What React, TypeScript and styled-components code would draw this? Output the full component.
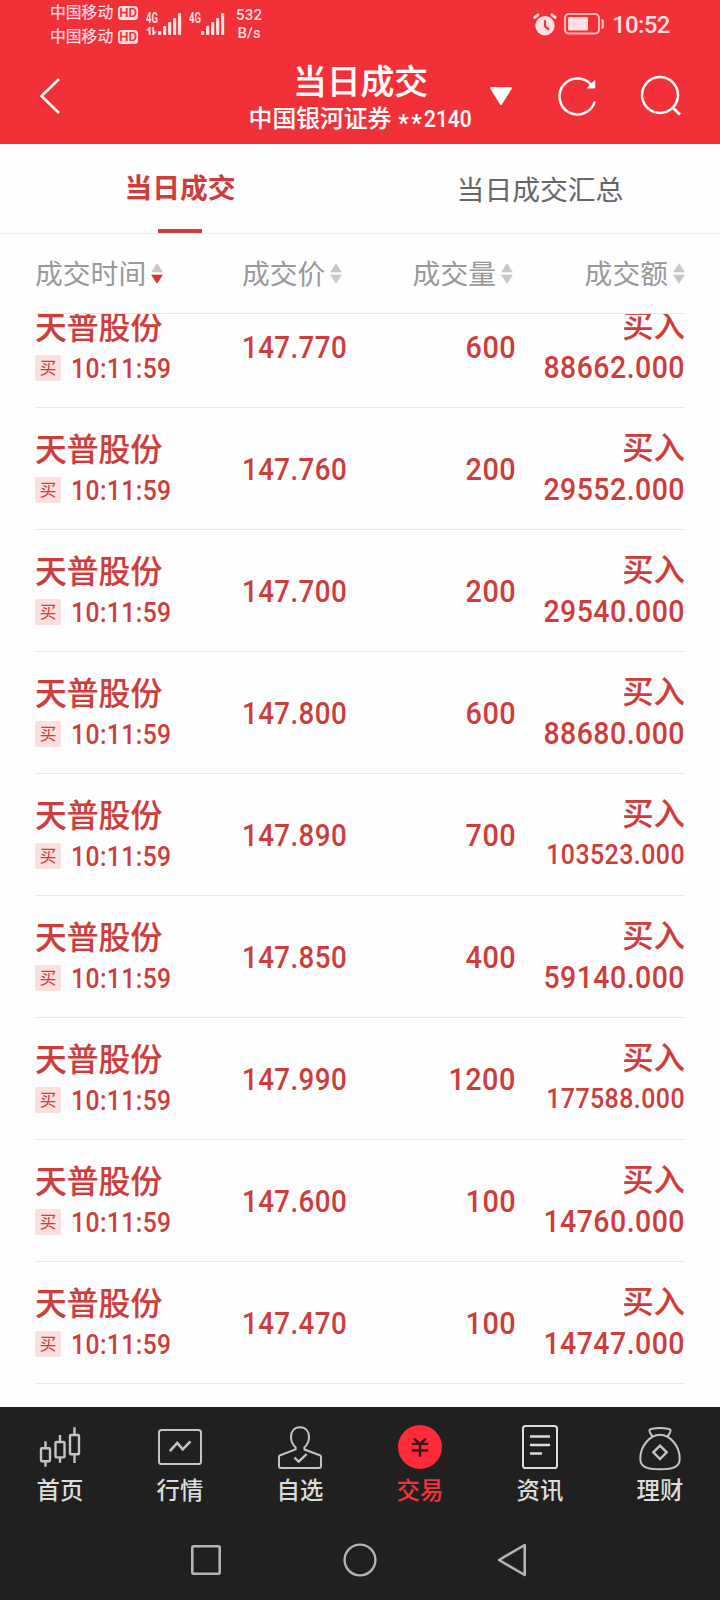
import React from 'react';
import styled, { createGlobalStyle } from 'styled-components';

const GlobalStyle = createGlobalStyle`
  * { box-sizing: border-box; }
  body {
    margin: 0;
    background: #fefefe;
    font-family: Roboto, "Noto Sans CJK SC", sans-serif;
  }
  svg { display: block; flex: none; }
`;

const RED = '#cd3d3c';

const Screen = styled.div`
  width: 720px;
  height: 1600px;
  display: flex;
  flex-direction: column;
  overflow: hidden;
  background: #fefefe;
`;

const Top = styled.header`
  height: 144px;
  flex: none;
  background: #f23038;
  color: #fff;
`;

const StatusBar = styled.div`
  height: 48px;
  display: flex;
  align-items: flex-start;
  padding: 0 50px 0 50px;
  color: #ffdfe1;
`;

const Carriers = styled.div`
  display: flex;
  flex-direction: column;
  padding-top: 1px;
`;

const Carrier = styled.div`
  height: 24px;
  display: flex;
  align-items: center;
  gap: 5px;
  font-size: 15.8px;
  line-height: 24px;
  -webkit-text-stroke: 0.2px;
`;

const HdBadge = styled.span`
  width: 20px;
  height: 14px;
  border-radius: 3.5px;
  background: #ffdfe1;
  color: #f23038;
  font-size: 13px;
  font-weight: 500;
  line-height: 14.5px;
  text-align: center;
`;

const Signal = styled.div<{ $gap: number }>`
  display: flex;
  margin: 13px 0 0 ${(p) => p.$gap}px;
`;

const NetType = styled.div`
  width: 12px;
  height: 22px;
  font-size: 14px;
  font-weight: 700;
  line-height: 11px;
  svg { margin-top: 3px; }
`;

const NetLabel = styled.span`
  display: block;
  transform: scaleX(0.68);
  transform-origin: left;
`;

const Speed = styled.div`
  width: 36px;
  margin: 6px 0 0 6px;
  font-size: 15px;
  font-weight: 500;
  line-height: 18px;
  text-align: center;
  letter-spacing: 0.2px;
`;

const StatusRight = styled.div`
  margin-left: auto;
  height: 48px;
  display: flex;
  align-items: center;
  gap: 7px;
`;

const Clock = styled.span`
  font-size: 24px;
  font-weight: 500;
  line-height: 28px;
  width: 58px;
  padding-top: 2px;
  letter-spacing: -0.6px;
`;

const NavBar = styled.div`
  height: 96px;
  display: grid;
  grid-template-columns: 240px 241px 239px;
`;

const BackCell = styled.div`
  padding: 30px 0 0 39px;
`;

const TitleCell = styled.div`
  display: flex;
  flex-direction: column;
  align-items: center;
  padding-top: 14px;
`;

const Title = styled.h1`
  margin: 0;
  font-size: 33.8px;
  font-weight: 500;
  line-height: 41px;
  -webkit-text-stroke: 0.2px;
`;

const Account = styled.div`
  font-size: 23.8px;
  font-weight: 500;
  line-height: 32px;
  height: 32px;
  display: flex;
  white-space: pre;
  -webkit-text-stroke: 0.1px;
`;

const Mask = styled.span`
  display: inline-block;
  padding-top: 4px;
  margin-left: 1px;
  letter-spacing: 2.5px;
`;

const AccountNumber = styled.span`
  display: inline-block;
  width: 48px;
  transform: scaleX(0.88);
  transform-origin: left;
`;

const Actions = styled.div`
  display: flex;
  align-items: flex-start;
  padding-left: 9px;
`;

const Tabs = styled.nav`
  height: 90px;
  flex: none;
  display: grid;
  grid-template-columns: 1fr 1fr;
  border-bottom: 1px solid #ececec;
`;

const Tab = styled.div<{ $active?: boolean }>`
  position: relative;
  padding-top: ${(p) => (p.$active ? 25 : 27)}px;
  text-align: center;
  font-size: 27.8px;
  line-height: 40px;
  font-weight: ${(p) => (p.$active ? 700 : 400)};
  color: ${(p) => (p.$active ? RED : '#666')};
`;

const Underline = styled.span`
  position: absolute;
  left: 158px;
  bottom: 0;
  width: 44px;
  height: 4px;
  background: #c83f40;
`;

const Columns = styled.div`
  margin: 0 35px;
  height: 80px;
  flex: none;
  display: grid;
  grid-template-columns: 207px 150px 121px 172px;
  align-items: center;
  border-bottom: 1px solid #e8e8e8;
  color: #999;
`;

const ColumnHead = styled.div<{ $end?: boolean }>`
  display: flex;
  align-items: center;
  justify-content: ${(p) => (p.$end ? 'flex-end' : 'flex-start')};
  gap: 5px;
  padding-top: 3px;
  font-size: 27.8px;
  line-height: 40px;
  white-space: nowrap;
  svg { margin-top: -4px; }
`;

const List = styled.main`
  flex: 1;
  min-height: 0;
  overflow: hidden;
  padding: 0 35px;
`;

const Scrolled = styled.div`
  margin-top: -28px;
`;

const Row = styled.div`
  height: 122px;
  display: grid;
  grid-template-columns: 207px 150px 122px 171px;
  border-bottom: 1px solid #e8e8e8;
  color: ${RED};
  font-weight: 500;
`;

const Stock = styled.div`
  padding-top: 22px;
`;

const StockName = styled.div`
  font-size: 31.8px;
  line-height: 40px;
  -webkit-text-stroke: 0.15px;
`;

const TimeLine = styled.div`
  display: flex;
  align-items: center;
  gap: 10px;
  height: 40px;
`;

const Side = styled.span`
  width: 26px;
  height: 26px;
  border-radius: 2px;
  background: #fbe0e0;
  font-size: 17px;
  font-weight: 400;
  line-height: 26px;
  text-align: center;
`;

const Num = styled.span<{ $small?: boolean; $end?: boolean; $scale?: number }>`
  display: block;
  font-size: ${(p) => (p.$small ? 28 : 32)}px;
  line-height: 40px;
  letter-spacing: 0.5px;
  white-space: nowrap;
  transform: scaleX(${(p) => p.$scale ?? 0.89});
  transform-origin: ${(p) => (p.$end ? 'right' : 'left')};
`;

const Middle = styled.div<{ $end?: boolean }>`
  padding-top: 41px;
  margin-right: ${(p) => (p.$end ? -2 : 0)}px;
  display: flex;
  justify-content: ${(p) => (p.$end ? 'flex-end' : 'flex-start')};
`;

const TimeText = styled.div`
  padding-top: 2px;
`;

const Amount = styled.div`
  display: flex;
  flex-direction: column;
  align-items: flex-end;
  padding-top: 21px;
`;

const Direction = styled.div`
  font-size: 31.4px;
  line-height: 40px;
  -webkit-text-stroke: 0.15px;
`;

const Bottom = styled.footer`
  height: 193px;
  flex: none;
  background: #202020;
`;

const TabBar = styled.div`
  height: 113px;
  display: grid;
  grid-template-columns: repeat(6, 120px);
  padding-top: 18px;
`;

const TabItem = styled.div<{ $active?: boolean }>`
  display: flex;
  flex-direction: column;
  align-items: center;
  gap: 5px;
  font-size: 23.4px;
  font-weight: 500;
  line-height: 34px;
  color: ${(p) => (p.$active ? '#f5313c' : '#dcdcdc')};
  svg { overflow: visible; }
`;

const SystemBar = styled.div`
  height: 80px;
  display: flex;
  justify-content: center;
  align-items: center;
  gap: 118px;
`;

const SignalBars = () => (
  <svg width="24" height="22" viewBox="0 0 24 22" fill="#ffdfe1">
    <rect x="0" y="18" width="3.2" height="4" rx="1" />
    <rect x="5" y="13" width="3.2" height="9" rx="1" />
    <rect x="10" y="9" width="3.2" height="13" rx="1" />
    <rect x="15" y="5" width="3.2" height="17" rx="1" />
    <rect x="20" y="0" width="3.2" height="22" rx="1" />
  </svg>
);

const DataArrows = () => (
  <svg width="11" height="8" viewBox="0 0 11 8" fill="#ffdfe1">
    <path d="M0 3.5 3 0h1.6v8H2.7V3.5zM6.2 0h1.9v4.5H11L7.8 8H6.2z" />
  </svg>
);

const Sorter = ({ down }: { down?: boolean }) => (
  <svg width="12" height="21" viewBox="0 0 12 21">
    <path d="M6 .6 11.4 9H.6z" fill="#c8c8c8" stroke="#c8c8c8" strokeWidth=".6" />
    <path d="M6 20.4 11.4 12H.6z" fill={down ? '#d93030' : '#c8c8c8'} stroke={down ? '#d93030' : '#c8c8c8'} strokeWidth=".6" />
  </svg>
);

const AlarmIcon = () => (
  <svg width="24" height="23" viewBox="0 0 24 23" fill="none">
    <circle cx="12" cy="12.7" r="9.7" fill="#ffdfe1" />
    <path d="M1.8 4.4 5 1.8M22.2 4.4 19 1.8" stroke="#ffdfe1" strokeWidth="2.8" strokeLinecap="round" />
    <path d="M12 8v5.2l3.4 3" stroke="#f23038" strokeWidth="2.2" strokeLinecap="round" />
  </svg>
);

const BatteryIcon = () => (
  <svg width="41" height="22" viewBox="0 0 41 22" fill="none">
    <rect x="1" y="1" width="34" height="19.6" rx="4" stroke="#ffb9bd" strokeWidth="2" />
    <rect x="4" y="4" width="20" height="13.6" rx="1.5" fill="#ffdfe1" />
    <path d="M37.5 6h1a2 2 0 0 1 1.5 2v6a2 2 0 0 1-1.5 2h-1z" fill="#ffb9bd" />
  </svg>
);

const svgIcon = { width: 44, height: 44, viewBox: '0 0 44 44', fill: 'none', stroke: '#c4c4c4', strokeWidth: 2 };

const CandlesIcon = () => (
  <svg {...svgIcon} strokeWidth={2.4}>
    <rect x="3" y="23.3" width="9" height="13" rx="1" />
    <rect x="17.5" y="17" width="9" height="15.4" rx="1" />
    <rect x="32" y="10" width="9" height="19.3" rx="1" />
    <path d="M7.5 16.3v7M7.5 36.5v5.2M22 10v7M22 32.5v5.3M36.5 2.3V10M36.5 29.5V38" />
  </svg>
);

const QuoteIcon = () => (
  <svg {...svgIcon}>
    <rect x="1" y="5" width="42" height="34" rx="2.6" />
    <path d="M11.8 26.2 19.3 18l5.4 6.4 7.8-8.1" strokeWidth="2.5" />
  </svg>
);

const PersonIcon = () => (
  <svg {...svgIcon}>
    <path d="M17.6 24.4v-2.1C14.4 19.6 13 16.8 13 12c0-6 3.600-9.700 9-9.700S31 6 31 12c0 4.800-1.400 7.600-4.600 10.300v2.200L41.800 30.200Q43 30.700 43 32v9Q43 43 41 43H3Q1 43 1 41v-9Q1 30.700 2.200 30.200Z" strokeLinejoin="round" />
    <path d="M16.5 32.6 20.7 36.7 28.7 29" strokeWidth="2.3" />
  </svg>
);

const TradeIcon = () => (
  <svg {...svgIcon} stroke="#3a1517">
    <circle cx="22" cy="22" r="22" fill="#ff2b39" stroke="none" />
    <path d="M16 13.6 22 19l6-5.400M13.800 18.900h16.400M13.800 25.500h16.400M22 19v12.700" strokeWidth="2.4" />
  </svg>
);

const NewsIcon = () => (
  <svg {...svgIcon} stroke="#dcdcdc">
    <rect x="5" y="1" width="34" height="42" rx="2.6" />
    <path d="M12 11.5h20M12 20h20M12 28.5h12" strokeWidth="2.4" />
  </svg>
);

const MoneyBagIcon = () => (
  <svg {...svgIcon}>
    <path d="M14.6 12 11.9 7.2C10.6 4.6 12 4 14 3.7Q22 2.3 30 3.7C32 4 33.4 4.6 32.1 7.2L29.4 12" />
    <path d="M22 9.8C12.5 9.8 2.3 20.5 2.3 33.5 2.3 41.5 7.5 44.3 22 44.3S41.7 41.5 41.7 33.5C41.7 20.5 31.5 9.8 22 9.8Z" />
    <path d="M22 20.6 28.7 27.3 22 34 15.3 27.3Z" strokeWidth="2.4" />
  </svg>
);

type Trade = { price: string; volume: string; amount: string };

const trades: Trade[] = [
  { price: '147.770', volume: '600', amount: '88662.000' },
  { price: '147.760', volume: '200', amount: '29552.000' },
  { price: '147.700', volume: '200', amount: '29540.000' },
  { price: '147.800', volume: '600', amount: '88680.000' },
  { price: '147.890', volume: '700', amount: '103523.000' },
  { price: '147.850', volume: '400', amount: '59140.000' },
  { price: '147.990', volume: '1200', amount: '177588.000' },
  { price: '147.600', volume: '100', amount: '14760.000' },
  { price: '147.470', volume: '100', amount: '14747.000' },
];

const tabItems = [
  { label: '首页', Icon: CandlesIcon },
  { label: '行情', Icon: QuoteIcon },
  { label: '自选', Icon: PersonIcon },
  { label: '交易', Icon: TradeIcon, active: true },
  { label: '资讯', Icon: NewsIcon },
  { label: '理财', Icon: MoneyBagIcon },
];

export default function App() {
  return (
    <Screen>
      <GlobalStyle />
      <Top>
        <StatusBar>
          <Carriers>
            <Carrier>中国移动<HdBadge>HD</HdBadge></Carrier>
            <Carrier>中国移动<HdBadge>HD</HdBadge></Carrier>
          </Carriers>
          <Signal $gap={8}>
            <NetType><NetLabel>4G</NetLabel><DataArrows /></NetType>
            <SignalBars />
          </Signal>
          <Signal $gap={7}>
            <NetType><NetLabel>4G</NetLabel></NetType>
            <SignalBars />
          </Signal>
          <Speed>532<br />B/s</Speed>
          <StatusRight>
            <AlarmIcon />
            <BatteryIcon />
            <Clock>10:52</Clock>
          </StatusRight>
        </StatusBar>
        <NavBar>
          <BackCell>
            <svg width="22" height="36" viewBox="0 0 22 36" fill="none" stroke="#fff" strokeWidth="2.6">
              <path d="M20 1 2.5 18 20 35" />
            </svg>
          </BackCell>
          <TitleCell>
            <Title>当日成交</Title>
            <Account>中国银河证券 <Mask>**</Mask><AccountNumber>2140</AccountNumber></Account>
          </TitleCell>
          <Actions>
            <svg width="230" height="96" viewBox="490 48 230 96" fill="none" stroke="#fff" strokeWidth="2.5">
              <path d="M491 88h20l-10 16z" fill="#fff" strokeWidth="2" strokeLinejoin="round" />
              <path d="M594.8 101.5A18 18 0 1 1 592.5 86.5" />
              <path d="M594.8 80.5v7.5h-7.5z" fill="#fff" strokeWidth="1" />
              <circle cx="660" cy="95" r="18" />
              <path d="M672.5 107.5 680 114.5" strokeWidth="2.8" />
            </svg>
          </Actions>
        </NavBar>
      </Top>
      <Tabs>
        <Tab $active>当日成交<Underline /></Tab>
        <Tab>当日成交汇总</Tab>
      </Tabs>
      <Columns>
        <ColumnHead>成交时间<Sorter down /></ColumnHead>
        <ColumnHead>成交价<Sorter /></ColumnHead>
        <ColumnHead $end>成交量<Sorter /></ColumnHead>
        <ColumnHead $end>成交额<Sorter /></ColumnHead>
      </Columns>
      <List>
        <Scrolled>
          {trades.map((t) => (
            <Row key={t.price}>
              <Stock>
                <StockName>天普股份</StockName>
                <TimeLine>
                  <Side>买</Side>
                  <TimeText><Num $small $scale={0.88}>10:11:59</Num></TimeText>
                </TimeLine>
              </Stock>
              <Middle><Num $scale={0.865}>{t.price}</Num></Middle>
              <Middle $end><Num $end $scale={0.9}>{t.volume}</Num></Middle>
              <Amount>
                <Direction>买入</Direction>
                <Num $end $small={t.amount.length > 9}>{t.amount}</Num>
              </Amount>
            </Row>
          ))}
        </Scrolled>
      </List>
      <Bottom>
        <TabBar>
          {tabItems.map(({ label, Icon, active }) => (
            <TabItem key={label} $active={active}>
              <Icon />
              {label}
            </TabItem>
          ))}
        </TabBar>
        <SystemBar>
          <svg width="36" height="36" viewBox="0 0 36 36" fill="none" stroke="#b4b4b4" strokeWidth="2.6">
            <rect x="4.3" y="4.3" width="27.4" height="27.4" rx="1.5" />
          </svg>
          <svg width="36" height="36" viewBox="0 0 36 36" fill="none" stroke="#b4b4b4" strokeWidth="2.4">
            <circle cx="18" cy="18" r="15.4" />
          </svg>
          <svg width="36" height="36" viewBox="0 0 36 36" fill="none" stroke="#b4b4b4" strokeWidth="2.6" strokeLinejoin="round">
            <path d="M28.7 3v30L3 18z" />
          </svg>
        </SystemBar>
      </Bottom>
    </Screen>
  );
}
